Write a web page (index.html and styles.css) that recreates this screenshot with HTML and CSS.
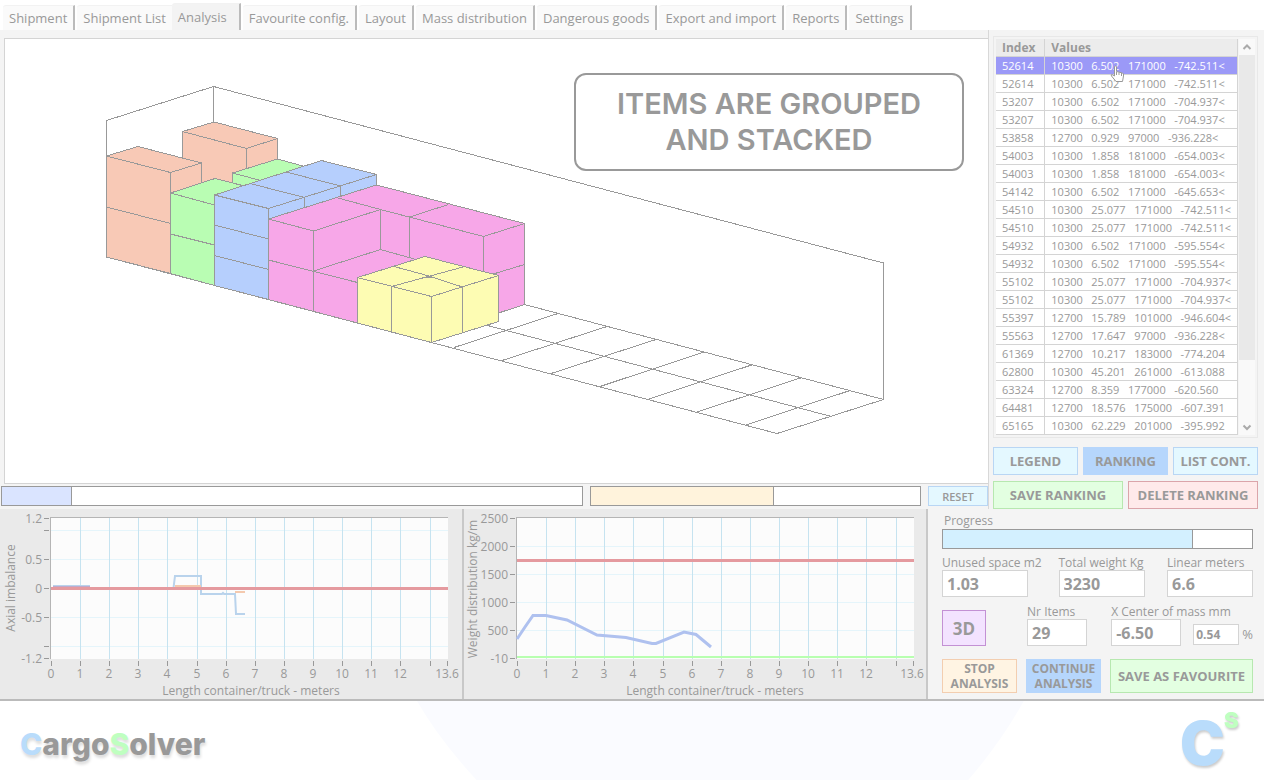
FILE: index.html
```html
<!DOCTYPE html>
<html lang="en">
<head>
<meta charset="utf-8">
<title>CargoSolver</title>
<link rel="stylesheet" href="styles.css">
</head>
<body>
<nav class="tabs" role="tablist">
  <button class="tab" role="tab">Shipment</button>
  <button class="tab tab-plain" role="tab">Shipment List</button>
  <button class="tab tab-active" role="tab" aria-selected="true">Analysis</button>
  <button class="tab" role="tab">Favourite config.</button>
  <button class="tab" role="tab">Layout</button>
  <button class="tab" role="tab">Mass distribution</button>
  <button class="tab" role="tab">Dangerous goods</button>
  <button class="tab" role="tab">Export and import</button>
  <button class="tab" role="tab">Reports</button>
  <button class="tab" role="tab">Settings</button>
</nav>
<main class="workspace">
  <div class="upper">
    <section class="view">
      <div class="scene">
        <svg class="scene-svg" viewBox="5 39 983 444" aria-label="Loaded container">
          <g class="wire">
            <path d="M106.500 257V120.500L213.500 86.500L883.500 263V399.500L777 433.500L106.500 257M213.500 86.500V122"/>
            <path d="M524.500 304.500L883.500 399.500M480 323.500L829.500 416"/>
            <path d="M454 347.500L558 313.500M502 360.500L607 326.500M551 373.500L656 339.500M600 386.500L704 352M649 399L753 364.500M697 412L802 377.500M746 425L850 390.500"/>
          </g>
          <g class="box orange">
            <path d="M182.500 131.500L214 122L277.500 138.500V200H182.500Z"/>
            <path d="M182.500 131.500L246.500 148.500L277.500 138.500M246.500 148.500V190"/>
            <path d="M106.500 156L138 146.500L201.500 163V200L170.500 273.500L106.500 257Z"/>
            <path d="M106.500 156L170.500 172.500L201.500 163M170.500 172.500V273.500M106.500 207L170.500 223.500"/>
          </g>
          <g class="box green">
            <path d="M232.500 173L277.500 159L321 171V210H232.500Z"/>
            <path d="M232.500 173L276 184.500"/>
            <path d="M170.500 193L215 178.500L260 190L214.500 285.500L170.500 273.500Z"/>
            <path d="M170.500 193L214.500 205M170.500 234L214.500 245"/>
          </g>
          <g class="box blue">
            <path d="M214.500 195L321.500 160.500L376.500 174.500V230L268.500 299.500L214.500 285.500Z"/>
            <path d="M214.500 195L268.500 208.500L376.500 174.500M268.500 208.500V299M250 183.500L304.500 197.500V225M286 172L340.500 186V210M214.500 225L268.500 239M214.500 255.500L268.500 269.500"/>
          </g>
          <g class="box pink">
            <path d="M268.500 219L376.500 185L524.500 223.500V304.500L431 335L357.500 323L268.500 299.500Z"/>
            <path d="M268.500 219L313.500 231L380.500 209.500L338 198M380.500 209.500L483.500 236.500L524.500 223.500M409.500 217L448.500 204.500M380.500 209.500V249.500M409.500 217V257.500M483.500 236.500V275M313.500 231V311M268.500 260L357.500 282.500M313.500 271L380.500 249.500L416 259.500M490 275L524.500 264.500"/>
          </g>
          <g class="box yellow">
            <path d="M357.500 277.500L425 256.500L498.500 275.500V321.500L431.500 342.500L357.500 323Z"/>
            <path d="M357.500 277.500L431.500 296.500L498.500 275.500M431.500 296.500V342.500M391.500 286.500V331.500M462.500 287V332M394 266.500L429 276L462.500 287M391.500 286.500L463 267M422 277L432 277"/>
          </g>
        </svg>
        <p class="banner">ITEMS ARE GROUPED<br>AND STACKED</p>
      </div>
      <div class="meters">
        <div class="meter meter-wide"><div class="fill fill-blue" style="width:12%"></div></div>
        <div class="meter meter-mid"><div class="fill fill-sand" style="width:55.500%"></div></div>
        <button class="btn btn-cyan btn-reset">RESET</button>
      </div>
    </section>
    <aside class="side">
      <div class="list">
        <table class="ranking">
          <thead><tr><th>Index</th><th>Values</th></tr></thead>
          <tbody>
            <tr class="selected"><td>52614</td><td>10300   6.502   171000   -742.511&lt;</td></tr>
            <tr><td>52614</td><td>10300   6.502   171000   -742.511&lt;</td></tr>
            <tr><td>53207</td><td>10300   6.502   171000   -704.937&lt;</td></tr>
            <tr><td>53207</td><td>10300   6.502   171000   -704.937&lt;</td></tr>
            <tr><td>53858</td><td>12700   0.929   97000   -936.228&lt;</td></tr>
            <tr><td>54003</td><td>10300   1.858   181000   -654.003&lt;</td></tr>
            <tr><td>54003</td><td>10300   1.858   181000   -654.003&lt;</td></tr>
            <tr><td>54142</td><td>10300   6.502   171000   -645.653&lt;</td></tr>
            <tr><td>54510</td><td>10300   25.077   171000   -742.511&lt;</td></tr>
            <tr><td>54510</td><td>10300   25.077   171000   -742.511&lt;</td></tr>
            <tr><td>54932</td><td>10300   6.502   171000   -595.554&lt;</td></tr>
            <tr><td>54932</td><td>10300   6.502   171000   -595.554&lt;</td></tr>
            <tr><td>55102</td><td>10300   25.077   171000   -704.937&lt;</td></tr>
            <tr><td>55102</td><td>10300   25.077   171000   -704.937&lt;</td></tr>
            <tr><td>55397</td><td>12700   15.789   101000   -946.604&lt;</td></tr>
            <tr><td>55563</td><td>12700   17.647   97000   -936.228&lt;</td></tr>
            <tr><td>61369</td><td>12700   10.217   183000   -774.204</td></tr>
            <tr><td>62800</td><td>10300   45.201   261000   -613.088</td></tr>
            <tr><td>63324</td><td>12700   8.359   177000   -620.560</td></tr>
            <tr><td>64481</td><td>12700   18.576   175000   -607.391</td></tr>
            <tr><td>65165</td><td>10300   62.229   201000   -395.992</td></tr>
          </tbody>
        </table>
        <div class="scrollbar">
          <svg class="arrow" viewBox="0 0 16 16"><path d="M4.500 10L8 6.500L11.500 10"/></svg>
          <div class="thumb"></div>
          <svg class="arrow" viewBox="0 0 16 16"><path d="M4.500 6.500L8 10L11.500 6.500"/></svg>
        </div>
        <svg class="pointer" viewBox="0 0 15 18"><path d="M4.500 1.500C5.500 .5 6.500 1 6.500 2V6.500L12.500 8Q14 8.500 13.500 11L12.500 16.500H6L1.500 11Q.5 9.500 2 9.500L4.500 11Z"/><path d="M6.500 7V10M9 7.500V10M11.500 8V11"/></svg>
      </div>
      <div class="btn-row btn-row-three">
        <button class="btn btn-cyan">LEGEND</button>
        <button class="btn btn-blue">RANKING</button>
        <button class="btn btn-cyan">LIST CONT.</button>
      </div>
      <div class="btn-row btn-row-two">
        <button class="btn btn-green">SAVE RANKING</button>
        <button class="btn btn-red">DELETE RANKING</button>
      </div>
    </aside>
  </div>
  <div class="lower">
    <section class="chart">
      <svg viewBox="0 509 462 190" aria-label="Axial imbalance">
        <rect class="plot" x="50" y="517" width="398" height="142"/>
        <path class="grid-h" d="M51 530.500H448M51 559.500H448M51 617.500H448M51 646.500H448"/>
        <path class="grid-v" d="M80.500 518V659M109.500 518V659M138.500 518V659M167.500 518V659M197.500 518V659M226.500 518V659M255.500 518V659M284.500 518V659M313.500 518V659M342.500 518V659M371.500 518V659M400.500 518V659M430.500 518V659"/>
        <path class="axis" d="M50.500 659V517.500H448"/>
        <path class="tick" d="M44 518.500H49M44 530.500H49M44 559.500H49M44 588.500H49M44 617.500H49M44 646.500H49M44 658.500H49M51.500 661V666M80.500 661V666M109.500 661V666M138.500 661V666M167.500 661V666M197.500 661V666M226.500 661V666M255.500 661V666M284.500 661V666M313.500 661V666M342.500 661V666M371.500 661V666M400.500 661V666M430.500 661V666M447.500 661V666"/>
        <path class="line-sky" d="M53 586H90M173.500 588L175 576H201V594H222L223 593L224 594H235L236 614H245"/>
        <path class="line-orange" d="M175 586H201M235 592H245"/>
        <path class="line-red" d="M51 588.500H448"/>
        <path class="line-violet" d="M53 586.500H90"/>
        <g class="num end"><text x="42" y="523">1.2</text><text x="42" y="564">0.5</text><text x="42" y="593">0</text><text x="42" y="622">-0.5</text><text x="42" y="663">-1.2</text></g>
        <g class="num mid"><text x="51" y="678">0</text><text x="80" y="678">1</text><text x="109" y="678">2</text><text x="138" y="678">3</text><text x="167" y="678">4</text><text x="197" y="678">5</text><text x="226" y="678">6</text><text x="255" y="678">7</text><text x="284" y="678">8</text><text x="313" y="678">9</text><text x="342" y="678">10</text><text x="371" y="678">11</text><text x="400" y="678">12</text><text x="447" y="678">13.6</text><text x="251" y="695">Length container/truck - meters</text><text transform="translate(15 588) rotate(-90)">Axial imbalance</text></g>
      </svg>
    </section>
    <section class="chart">
      <svg viewBox="464 509 462 190" aria-label="Weight distribution">
        <rect class="plot" x="516" y="517" width="398" height="142"/>
        <path class="grid-h" d="M517 546.500H914M517 574.500H914M517 602.500H914M517 630.500H914"/>
        <path class="grid-v" d="M546.500 518V659M575.500 518V659M604.500 518V659M633.500 518V659M663.500 518V659M692.500 518V659M721.500 518V659M750.500 518V659M779.500 518V659M808.500 518V659M837.500 518V659M866.500 518V659M896.500 518V659"/>
        <path class="axis" d="M516.500 659V517.500H914"/>
        <path class="tick" d="M510 518.500H515M510 546.500H515M510 574.500H515M510 602.500H515M510 630.500H515M510 658H515M517.500 661V666M546.500 661V666M575.500 661V666M604.500 661V666M633.500 661V666M663.500 661V666M692.500 661V666M721.500 661V666M750.500 661V666M779.500 661V666M808.500 661V666M837.500 661V666M866.500 661V666M896.500 661V666M913.500 661V666"/>
        <path class="line-green" d="M517 657H914"/>
        <path class="line-red" d="M517 560.500H914"/>
        <path class="line-blue" d="M517 639L525 627L533 615.500H546L567 620L597 635L626 637.500L652 643.500H656L684 632L696 634.500L711 647"/>
        <g class="num end"><text x="508" y="523">2500</text><text x="508" y="551">2000</text><text x="508" y="579">1500</text><text x="508" y="607">1000</text><text x="508" y="635">500</text><text x="508" y="663">-10</text></g>
        <g class="num mid"><text x="517" y="678">0</text><text x="546" y="678">1</text><text x="575" y="678">2</text><text x="604" y="678">3</text><text x="633" y="678">4</text><text x="663" y="678">5</text><text x="692" y="678">6</text><text x="721" y="678">7</text><text x="750" y="678">8</text><text x="779" y="678">9</text><text x="808" y="678">10</text><text x="837" y="678">11</text><text x="866" y="678">12</text><text x="912" y="678">13.6</text><text x="715" y="695">Length container/truck - meters</text><text transform="translate(477 589) rotate(-90)">Weight distribution kg/m</text></g>
      </svg>
    </section>
    <section class="panel">
      <div class="progress">
        <span class="label" id="progress-label">Progress</span>
        <div class="meter" role="progressbar" aria-labelledby="progress-label" aria-valuenow="81"><div class="fill fill-cyan" style="width:81%"></div></div>
      </div>
      <div class="fields fields-top">
        <label class="field">Unused space m2<input class="value" value="1.03"></label>
        <label class="field field-weight">Total weight Kg<input class="value" value="3230"></label>
        <label class="field">Linear meters<input class="value" value="6.6"></label>
      </div>
      <div class="fields fields-mid">
        <button class="btn btn-violet">3D</button>
        <label class="field field-items">Nr Items<input class="value" value="29"></label>
        <label class="field field-mass">X Center of mass mm<input class="value" value="-6.50"></label>
        <label class="percent"><input class="value value-small" value="0.54">%</label>
      </div>
      <div class="actions">
        <button class="btn btn-sand btn-two-line">STOP ANALYSIS</button>
        <button class="btn btn-blue btn-two-line">CONTINUE ANALYSIS</button>
        <button class="btn btn-green">SAVE AS FAVOURITE</button>
      </div>
    </section>
  </div>
</main>
<footer class="footer">
  <svg class="swoosh" viewBox="0 0 612 79" preserveAspectRatio="none"><path d="M0 0H612Q590 40 556 79H60Q22 38 0 0Z"/></svg>
  <div class="wordmark"><span class="c">C</span>argo<span class="s">S</span>olver</div>
  <svg class="mark" viewBox="0 0 64 79" aria-label="CS"><text class="mark-c" x="0" y="64">C</text><text class="mark-s" x="44" y="27">S</text></svg>
</footer>
</body>
</html>
```
FILE: styles.css
```css
* { box-sizing: border-box; }
body {
  margin: 0;
  background: #fff;
  color: #999;
  font-family: "Open Sans", "Noto Sans", sans-serif;
  font-size: 12px;
}
button, input { font: inherit; color: inherit; margin: 0; }

.tabs { display: flex; align-items: flex-end; gap: 2px; height: 30px; padding-left: 3px; }
.tab {
  height: 25px;
  padding: 0 6px;
  border: 0;
  border-top: 1px solid #f2f2f2;
  border-right: 2px solid #bbb;
  border-radius: 3px 0 0 0;
  background: #fafafa;
  font-size: 13px;
  line-height: 20px;
  white-space: nowrap;
}
.tab-plain { border-right: 0; margin-right: -2px; }
.tab-active { height: 27px; padding-right: 12px; background: #f3f3f3; }

.workspace { background: #f4f4f4; border-bottom: 2px solid #bbb; }
.upper { display: flex; }
.view { flex: 1; min-width: 0; padding-top: 8px; border-right: 1px solid #d8d8d8; }
.scene {
  position: relative;
  margin-left: 4px;
  background: #fff;
  border: 1px solid #d4d4d4;
  border-right: 0;
}
.scene-svg { display: block; width: 100%; }
.wire, .box { stroke: #999; stroke-width: 1; fill: none; shape-rendering: crispEdges; }
.box path:nth-child(even) { fill: none; }
.orange { fill: #f8c9b6; }
.green { fill: #b9fdb3; }
.blue { fill: #b6cffd; }
.pink { fill: #f7a7e8; }
.yellow { fill: #fdfcb3; }
.banner {
  position: absolute;
  top: 34px;
  right: 24px;
  width: 390px;
  margin: 0;
  padding: 11px 0;
  border: 2px solid #999;
  border-radius: 12px;
  background: #fff;
  color: #999;
  font: 600 29px/36px Inter, sans-serif;
  text-align: center;
}

.meters { display: flex; gap: 7px; padding: 2px 0 2px 1px; }
.meter { height: 20px; border: 1px solid #999; background: #fff; }
.meter-wide { flex: 583; }
.meter-mid { flex: 331; }
.fill { height: 100%; border-right: 1px solid #999; }
.fill-blue { background: #dae4ff; }
.fill-sand { background: #fff3dc; }
.fill-cyan { background: #d3f0ff; }

.btn {
  padding: 0;
  border: 1px solid;
  font-size: 13px;
  font-weight: 700;
  line-height: 15px;
}
.btn-cyan { background: #e4f8ff; border-color: #b9d6f4; }
.btn-blue { background: #b6d6fc; border-color: #b6d6fc; }
.btn-green { background: #e3ffe1; border-color: #b7e8b0; }
.btn-red { background: #ffeaea; border-color: #dba5aa; }
.btn-violet { background: #f3e3ff; border-color: #c391d4; }
.btn-sand { background: #fff4e3; border-color: #f3ceb0; }
.btn-reset { width: 60px; font-size: 11px; font-weight: 600; }
.btn-two-line { font-size: 12px; padding: 0 4px; }

.side { width: 275px; padding: 6px 6px 0 4px; }
.list { position: relative; display: flex; gap: 1px; padding: 2px; border: 1px solid #e8e8e8; background: #f4f4f4; }
.ranking { width: 243px; border-collapse: collapse; background: #fff; font-size: 11px; line-height: 17px; }
.ranking th, .ranking td { padding: 0 6px; border-bottom: 1px solid #d4d4d4; border-right: 1px solid #d4d4d4; text-align: left; white-space: pre; }
.ranking th { background: #ececec; font-size: 12px; font-weight: 700; }
.ranking th:first-child { width: 52px; }
.ranking .selected { background: #9b99f7; color: #fff; }
.scrollbar { display: flex; flex-direction: column; width: 16px; background: #f9f9f9; }
.thumb { flex: 0 0 305px; background: #e9e9e9; }
.arrow { width: 16px; height: 16px; fill: none; stroke: #aaa; stroke-width: 2; }
.scrollbar .arrow:last-child { margin-top: auto; }
.pointer { position: absolute; left: 116px; top: 28px; width: 15px; height: 18px; fill: #fff; stroke: #999; }
.btn-row { display: grid; gap: 5px; }
.btn-row .btn { height: 28px; }
.btn-row-three { grid-template-columns: repeat(3, 1fr); margin-top: 9px; }
.btn-row-two { grid-template-columns: 1fr 1fr; margin-top: 6px; }

.lower { display: flex; }
.chart { flex: 1; min-width: 0; background: #eaeaea; border-right: 2px solid #c8c8c8; }
.chart svg { display: block; width: 100%; }
.plot { fill: #fcfcfc; }
.grid-h, .grid-v, .axis, .tick { fill: none; stroke-width: 1; shape-rendering: crispEdges; }
.grid-h { stroke: #e5f5fb; }
.grid-v { stroke: #c6e3f0; }
.axis { stroke: #b5b5b5; }
.tick { stroke: #999; }
.line-sky, .line-orange, .line-violet, .line-red, .line-green, .line-blue { fill: none; stroke-width: 2; }
.line-sky { stroke: #b9d3ec; }
.line-orange { stroke: #f4c9ae; }
.line-violet { stroke: #c0aacb; stroke-width: 1; }
.line-red { stroke: #e59a9f; stroke-width: 3; }
.line-green { stroke: #b8ffb0; }
.line-blue { stroke: #afc1ef; stroke-width: 3; }
.num { fill: #999; font-size: 12px; }
.end { text-anchor: end; }
.mid { text-anchor: middle; }

.panel { display: flex; flex-direction: column; width: 336px; padding: 4px 11px 6px 14px; }
.label { line-height: 16px; }
.field { line-height: 14px; white-space: nowrap; }
.progress .label { display: block; padding-left: 2px; }
.fields { display: flex; justify-content: space-between; align-items: flex-end; }
.fields-top { margin-top: 7px; }
.field { display: flex; flex-direction: column; width: 86px; }
.field-weight { margin-left: 8px; }
.value {
  width: 100%;
  height: 27px;
  padding: 0 4px;
  border: 1px solid #d4d4d4;
  background: #fff;
  font-size: 16px;
  font-weight: 700;
}
.value-small { width: 46px; height: 21px; padding: 0 2px; font-size: 12px; }
.fields-mid { margin-top: 8px; }
.field-items { width: 60px; margin-left: 17px; }
.field-mass { width: 70px; }
.percent { display: flex; align-items: center; gap: 3px; height: 24px; margin-left: -12px; font-size: 13px; }
.btn-violet { width: 44px; height: 36px; font-size: 17px; }
.actions { display: grid; grid-template-columns: 75px 75px 1fr; gap: 9px; margin-top: 13px; height: 34px; }

.footer { position: relative; display: flex; align-items: center; justify-content: space-between; height: 79px; padding: 0 20px; }
.swoosh { position: absolute; left: 33%; top: 0; width: 48%; height: 100%; fill: #fafbff; }
.wordmark, .mark { position: relative; }
.wordmark { padding-top: 6px; font: 800 30px/36px Inter, sans-serif; text-shadow: 1px 3px 3px #ddd; }
.c { color: #b9dcfb; }
.s { color: #bfffc0; }
.mark { width: 64px; height: 79px; overflow: visible; font-family: Inter, sans-serif; font-weight: 900; filter: drop-shadow(1px 2px 1px #ccc); }
.mark-c { font-size: 60px; fill: #b9dcfb; }
.mark-s { font-size: 22px; fill: #bfffc0; }
```
